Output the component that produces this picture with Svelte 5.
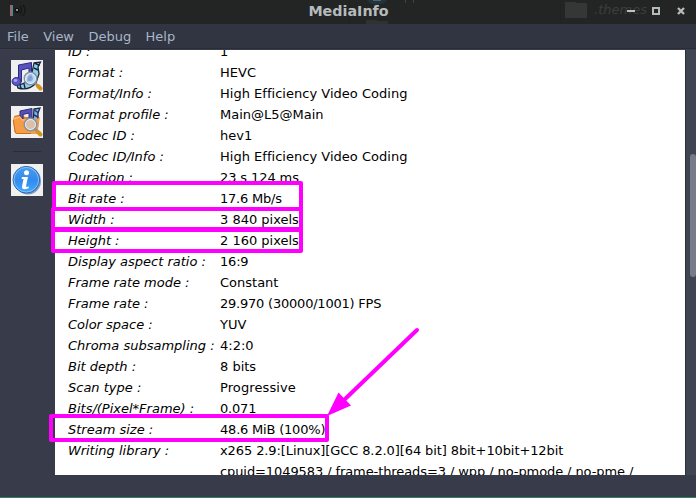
<script>
  const menus = ['File', 'View', 'Debug', 'Help'];
  // label, value, tracking of the value in px
  const rows = [
    ['ID :', '1', 0],
    ['Format :', 'HEVC', 0],
    ['Format/Info :', 'High Efficiency Video Coding', 0.02],
    ['Format profile :', 'Main@L5@Main', 0],
    ['Codec ID :', 'hev1', 0],
    ['Codec ID/Info :', 'High Efficiency Video Coding', 0.02],
    ['Duration :', '23 s 124 ms', -0.1],
    ['Bit rate :', '17.6 Mb/s', -0.22],
    ['Width :', '3 840 pixels', 0],
    ['Height :', '2 160 pixels', 0],
    ['Display aspect ratio :', '16:9', -0.2],
    ['Frame rate mode :', 'Constant', 0],
    ['Frame rate :', '29.970 (30000/1001) FPS', -0.22],
    ['Color space :', 'YUV', 0],
    ['Chroma subsampling :', '4:2:0', 0],
    ['Bit depth :', '8 bits', 0],
    ['Scan type :', 'Progressive', 0.1],
    ['Bits/(Pixel*Frame) :', '0.071', -0.2],
    ['Stream size :', '48.6 MiB (100%)', -0.2],
    ['Writing library :', 'x265 2.9:[Linux][GCC 8.2.0][64 bit] 8bit+10bit+12bit', -0.1],
    ['', 'cpuid=1049583 / frame-threads=3 / wpp / no-pmode / no-pme /', -0.09]
  ];
</script>

{#snippet lens()}
  <path d="M24 23 L28 27" stroke="#8a9299" stroke-width="2.5" />
  <circle cx="19.5" cy="18.5" r="6.2" fill="#bcd8f4" fill-opacity=".82" stroke="#8593a0" stroke-width="1.6" />
  <circle cx="19.5" cy="18.5" r="5" fill="none" stroke="#eef8ff" stroke-width=".8" />
  <path d="M27 26 L29.5 28.5" stroke="#d09420" stroke-width="4" stroke-linecap="round" />
{/snippet}

<div class="window">
  <header>
    <svg class="backdrop" width="696" height="24" viewBox="0 0 696 24">
      <path d="M10 5h1.5v11H10z" fill="#c9565c" />
      <path d="M11.5 5h1.2v11h-1.2z" fill="#55b9c4" />
      <circle cx="17" cy="10.5" r="2.6" fill="#111" />
      <circle cx="17" cy="10" r="1" fill="#b9b9b9" />
      <path d="M20 6q3 4 0 9M23 5q4 5 0 11" fill="none" stroke="#161616" stroke-width="1.3" />
      <path d="M367 0h20q-2 4.5-10 4.5T367 0z" fill="#20343e" />
      <path d="M373 0h8v1h-8z" fill="#53636b" />
      <path d="M405 0h1v3h-1zM413 0h1v3h-1z" fill="#424444" />
      <path d="M366 20h11v1h11v3h-22z" fill="#303131" />
      <path d="M349 0h1v24h-1zM560 0h1v24h-1z" fill="#202121" />
      <path d="M565 2h10l2 1h10v15h-22z" fill="#353737" />
      <text x="594" y="14" font-size="13" font-style="italic" fill="#3b3e3f">.themes</text>
    </svg>
    <h1>MediaInfo</h1>
    <svg class="controls" width="64" height="12" viewBox="0 0 64 12">
      <path d="M0 4h8v2H0z" fill="#bac3c4" />
      <path d="M26 2h6v6h-6z" fill="none" stroke="#b3bcbb" stroke-width="2" />
      <path d="M51 2l6 6M57 2l-6 6" stroke="#b3bcbb" stroke-width="2.4" />
    </svg>
  </header>
  <nav>{#each menus as item}<span>{item}</span>{/each}</nav>
  <main>
    <aside>
      <svg class="open" width="32" height="32" viewBox="0 0 32 32">
        <rect width="32" height="32" fill="#f0f0f1" />
        <path d="M23 3 L29.5 2 L27 7 L28 14 L25 23 Q18 31 7 28 L6 25 Q16 24 20 17Z" fill="#8ed0ec" stroke="#1b2538" stroke-width="1.3" />
        <path d="M23.5 3l5 2.5M23 8l4 2M9 25l1 3M13 24l1 4" stroke="#16213a" stroke-width="1.4" />
        <path d="M7.5 5 L20.5 2.5 L20.5 16 L18 16 L18 8 L10.5 10 L10.5 22 L7.5 22Z" fill="#5753be" stroke="#2c2a80" />
        <ellipse cx="5.5" cy="21.5" rx="4.5" ry="4" fill="#5b57c6" stroke="#322f8b" />
        <ellipse cx="4.5" cy="20.5" rx="1.8" ry="1.4" fill="#a8a7f0" />
        {@render lens()}
        <circle cx="19" cy="18.5" r="2.8" fill="#6d82cf" opacity=".6" />
      </svg>
      <svg class="folder" width="32" height="32" viewBox="0 0 32 32">
        <rect width="32" height="32" fill="#f0f0f1" />
        <path d="M3 10l8-2 3 3h14l-1 14-22 1z" fill="#e57d1e" />
        <path d="M23 3 L29 2 L27 7 L27 17 L22 17Z" fill="#7eb9e5" stroke="#1e2b52" stroke-width="1.3" />
        <path d="M23.5 4l4 3M23 9l4 2" stroke="#213464" stroke-width="1.4" />
        <path d="M9 13V5l12-2.5V15h-3V7l-6 1.5V13z" fill="#5450b4" stroke="#302e80" />
        <path d="M2 13q0-1.5 2-2l5-1 2 3h15l3-2-3 17H6q-2 0-2.5-2z" fill="#f69c42" />
        <path d="M3 13l6-2 2 3h13" fill="none" stroke="#ffc486" />
        <path d="M2.3 14l1.8 12q.5 1.5 2.5 1.5H20" fill="none" stroke="#cb6c18" />
        {@render lens()}
        <circle cx="19.5" cy="18.5" r="4.3" fill="#e6b995" opacity=".75" />
      </svg>
      <hr />
      <svg width="32" height="32" viewBox="0 0 32 32">
        <defs>
          <linearGradient id="blue" x2="0" y2="1">
            <stop stop-color="#4f9ce9" />
            <stop offset=".5" stop-color="#328aed" />
            <stop offset="1" stop-color="#45a8ff" />
          </linearGradient>
        </defs>
        <rect width="32" height="32" fill="#f0f0f1" />
        <ellipse cx="17" cy="17" rx="13" ry="13.5" fill="#7d98b7" />
        <circle cx="15.3" cy="15.7" r="13.3" fill="url(#blue)" stroke="#2468b8" />
        <circle cx="15.3" cy="15.7" r="12.3" fill="none" stroke="#8ec5f6" stroke-width=".9" />
        <circle cx="15.5" cy="8.7" r="2.5" fill="#fff" />
        <path d="M11 13h6l-2 9q0 1.5 3 .5l-.5 1.8q-7 2.5-6.5-1.8l1.5-7.4H10.5z" fill="#fff" />
      </svg>
    </aside>
    <section>
      <div class="rows">
        {#each rows as [label, value, tracking]}
          <div class="row"><i>{label}</i><span style="letter-spacing: {tracking}px">{value}</span></div>
        {/each}
      </div>
    </section>
    <div class="scroll"><div class="thumb"></div></div>
  </main>
  <footer></footer>
  <svg class="marks" width="696" height="498" viewBox="0 0 696 498">
    <g fill="none" stroke="#f0f" stroke-width="4" stroke-linejoin="round">
      <rect x="54" y="183" width="247" height="26" />
      <rect x="53" y="209" width="248" height="20" />
      <rect x="53" y="230" width="248" height="21" />
      <rect x="51" y="416" width="276" height="24" />
      <path d="M417 330 L343 401" stroke-linecap="round" />
    </g>
    <path d="M327 416 L338.5 392.5 L351 405.5Z" fill="#f0f" />
  </svg>
</div>

<style>
  :global(body) { background: #383c4a; }
  .window { width: 696px; height: 498px; display: flex; flex-direction: column; position: relative; overflow: hidden; background: #383c4a; font-family: "DejaVu Sans", sans-serif; font-size: 13px; }
  header { height: 24px; flex: none; background: #232424; display: flex; justify-content: center; position: relative; }
  .backdrop { position: absolute; inset: 0; }
  h1 { position: relative; margin: 0; padding-left: 1px; font-size: 14.3px; line-height: 22px; font-weight: bold; color: #b6bbbd; }
  .controls { position: absolute; left: 627px; top: 6px; }
  nav { height: 26px; flex: none; box-sizing: border-box; display: flex; gap: 14.4px; padding-left: 7px; line-height: 25px; background: #303541; color: #a9b6ca; border-bottom: 1px solid #3b3e4b; box-shadow: inset 0 -1px #292c37; }
  main { flex: none; height: 425px; display: flex; }
  aside { width: 55px; flex: none; box-sizing: border-box; padding: 10px 0 0 11px; }
  aside svg { display: block; }
  .open { margin-bottom: 14px; }
  hr { width: 28px; height: 1px; border: 0; background: #292d38; margin: 13px 0 12px 2px; }
  section { width: 630px; flex: none; background: #fff; color: #000; overflow: hidden; }
  .rows { margin-top: -9px; padding-left: 13px; }
  .row { height: 21px; line-height: 21px; display: flex; white-space: pre; }
  .row i { width: 152px; flex: none; }
  .scroll { flex: 1; background: #404552; border-left: 1px solid #2b2f3a; display: flex; justify-content: center; padding-left: 3px; }
  .thumb { width: 6px; height: 123px; margin-top: 104px; border-radius: 3px; background: #767b89; }
  footer { flex: 1; border-bottom: 1px solid #328068; }
  .marks { position: absolute; inset: 0; }
</style>
